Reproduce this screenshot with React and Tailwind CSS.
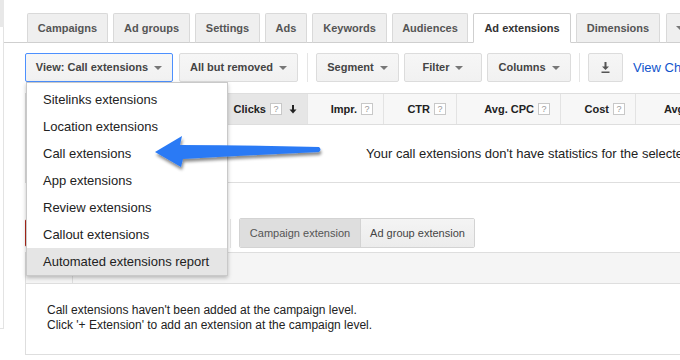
const tabs = [
  { label: "Campaigns", w: "w-[81px]" },
  { label: "Ad groups", w: "w-[77px]" },
  { label: "Settings", w: "w-[65px]" },
  { label: "Ads", w: "w-[42px]" },
  { label: "Keywords", w: "w-[75px]" },
  { label: "Audiences", w: "w-[76px]" },
  { label: "Ad extensions", w: "w-[98px]", active: true },
  { label: "Dimensions", w: "w-[84px]" },
];

const menuItems = [
  "Sitelinks extensions",
  "Location extensions",
  "Call extensions",
  "App extensions",
  "Review extensions",
  "Callout extensions",
  "Automated extensions report",
];

const columns = [
  { label: "Clicks", w: "w-[81px]", sorted: true },
  { label: "Impr.", w: "w-[76px]" },
  { label: "CTR", w: "w-[73px]" },
  { label: "Avg. CPC", w: "w-[104px]" },
  { label: "Cost", w: "w-[75px]" },
  { label: "Avg. pos.", w: "w-[104px]" },
];

// small grey triangle used on every dropdown button
const Caret = () => (
  <span className="inline-block w-0 h-0 border-l-[4px] border-r-[4px] border-t-[4px] border-l-transparent border-r-transparent border-t-[#777]" />
);

const HelpBox = () => (
  <span className="w-[12px] h-[12px] border border-[#c8c8c8] bg-white text-[9px] leading-[10px] text-[#999] font-normal flex items-center justify-center">
    ?
  </span>
);

const Button = ({ children, w, focused, caret = true }) => (
  <div
    className={`${w} shrink-0 h-[29px] rounded-[2px] border ${
      focused ? "border-[#4d90fe]" : "border-[#dcdcdc]"
    } bg-linear-to-b from-[#f6f6f6] to-[#f1f1f1] text-[11px] font-bold text-[#444] flex items-center justify-center gap-[6px]`}
  >
    {children}
    {caret && <Caret />}
  </div>
);

const Separator = () => <div className="w-px h-[29px] bg-[#e5e5e5] shrink-0" />;

export default function App() {
  return (
    <div className="relative w-[680px] h-[360px] overflow-hidden bg-white flex font-['Liberation_Sans',Arial,sans-serif]">
      {/* left sidebar edge */}
      <div className="w-[4px] shrink-0 flex flex-col">
        <div className="h-[27px] bg-[#e8e8e8]" />
        <div className="h-[302px] border-r border-b border-[#e3e3e3]" />
      </div>

      <div className="flex-1 min-w-0 flex flex-col">
        {/* tabs */}
        <div className="h-[43px] pt-[13px] pl-[23px] flex gap-[5px] border-b border-[#cfcfcf]">
          {tabs.map((t) => (
            <div
              key={t.label}
              className={`${t.w} shrink-0 h-[30px] rounded-t-[2px] border flex items-center justify-center text-[11px] font-bold ${
                t.active
                  ? "bg-white border-[#cfcfcf] border-b-white text-[#333]"
                  : "bg-[#efefef] border-[#d9d9d9] border-b-[#cfcfcf] text-[#555]"
              }`}
            >
              {t.label}
            </div>
          ))}
          <div className="w-[40px] shrink-0 ml-[1px] h-[30px] rounded-t-[2px] border border-[#d9d9d9] border-b-[#cfcfcf] bg-[#efefef] flex items-center pl-[9px]">
            <Caret />
          </div>
        </div>

        {/* toolbar */}
        <div className="mt-[10px] pl-[21px] h-[29px] flex items-center">
          <Button w="w-[148px]" focused>
            View: Call extensions
          </Button>
          <div className="ml-[6px]">
            <Button w="w-[119px]">All but removed</Button>
          </div>
          <div className="ml-[9px]">
            <Separator />
          </div>
          <div className="ml-[8px] flex gap-[5px]">
            <Button w="w-[83px]">Segment</Button>
            <Button w="w-[78px]">Filter</Button>
            <Button w="w-[84px]">Columns</Button>
          </div>
          <div className="ml-[8px]">
            <Separator />
          </div>
          <div className="ml-[8px]">
            <Button w="w-[35px]" caret={false}>
              <svg width="9" height="11" viewBox="0 0 9 11">
                <rect x="3.5" y="0" width="2" height="5" fill="#555" />
                <polygon points="1,4.5 8,4.5 4.5,8" fill="#555" />
                <rect x="0.5" y="9.5" width="8" height="1.5" fill="#555" />
              </svg>
            </Button>
          </div>
          <span className="ml-[10px] text-[13px] text-[#15c] whitespace-nowrap">
            View Change History
          </span>
        </div>

        {/* statistics table */}
        <div className="mt-[11px] ml-[21px] w-[720px]">
          <div className="h-[32px] flex border-t border-b border-l border-[#dedede] bg-[#f7f7f7]">
            <div className="w-[201px] shrink-0 border-r border-[#dedede]" />
            {columns.map((c) => (
              <div
                key={c.label}
                className={`${c.w} shrink-0 border-r border-[#e3e3e3] flex items-center justify-end gap-[4px] pr-[10px] text-[11px] font-bold text-[#222] ${
                  c.sorted ? "bg-[#e6e6e6]" : ""
                }`}
              >
                <span>{c.label}</span>
                <HelpBox />
                {c.sorted && (
                  <svg width="8" height="9" viewBox="0 0 8 9" className="ml-[3px]">
                    <rect x="3" y="0" width="2" height="5" fill="#222" />
                    <polygon points="0.5,4.5 7.5,4.5 4,8.5" fill="#222" />
                  </svg>
                )}
              </div>
            ))}
          </div>
          <div className="h-[58px] border-b border-l border-[#dedede] flex items-center pl-[340px] text-[13px] text-[#222] whitespace-nowrap">
            Your call extensions don't have statistics for the selected date range.
          </div>
        </div>

        {/* campaign / ad group extension switch (red + edit buttons sit under the menu) */}
        <div className="mt-[35px] ml-[21px] h-[30px] flex items-center">
          <div className="w-[100px] h-[28px] shrink-0 rounded-[2px] border border-[#b0281a] bg-[#d14836]" />
          <div className="ml-[6px]">
            <Button w="w-[90px]" />
          </div>
          <div className="ml-[9px]">
            <Separator />
          </div>
          <div className="ml-[8px] h-[30px] flex rounded-[2px] border border-[#d3d3d3] overflow-hidden text-[11px] text-[#444]">
            <div className="w-[120px] bg-[#dedede] flex items-center justify-center text-[#555]">
              Campaign extension
            </div>
            <div className="w-[114px] border-l border-[#d3d3d3] bg-linear-to-b from-[#f4f4f4] to-[#ececec] flex items-center justify-center">
              Ad group extension
            </div>
          </div>
        </div>

        <div className="mt-[4px] ml-[21px]">
          <div className="h-[32px] flex border-t border-b border-l border-[#dedede] bg-[#f5f5f5]">
            <div className="w-[47px] border-r border-[#dedede]" />
          </div>
          <div className="h-[71px] border-l border-b border-[#dedede] pt-[19px] pl-[21px] text-[12px] leading-[15px] text-[#222]">
            <p>Call extensions haven't been added at the campaign level.</p>
            <p>Click '+ Extension' to add an extension at the campaign level.</p>
          </div>
        </div>
      </div>

      {/* open "View" dropdown */}
      <div className="absolute left-[26px] top-[82px] w-[202px] h-[194px] bg-white border border-[#c9c9c9] shadow-[0_2px_4px_rgba(0,0,0,0.25)] pt-[3px]">
        {menuItems.map((item, i) => (
          <div
            key={item}
            className={`h-[27px] pl-[16px] flex items-center text-[13px] text-[#222] ${
              i === menuItems.length - 1 ? "bg-[#e5e5e5]" : ""
            }`}
          >
            {item}
          </div>
        ))}
      </div>

      {/* blue callout arrow */}
      <svg
        className="absolute left-[150px] top-[130px]"
        width="180"
        height="48"
        viewBox="0 0 180 48"
      >
        <defs>
          <filter id="arrowShadow" x="-10%" y="-30%" width="120%" height="180%">
            <feDropShadow dx="1" dy="3" stdDeviation="1.5" floodColor="#000" floodOpacity="0.45" />
          </filter>
        </defs>
        <path
          d="M5,22 L32,6 L30,15 Q100,15 169,17 Q172,19.5 169,22 Q100,25 33,29 L31,37 Z"
          fill="#2a7af5"
          filter="url(#arrowShadow)"
        />
      </svg>
    </div>
  );
}
